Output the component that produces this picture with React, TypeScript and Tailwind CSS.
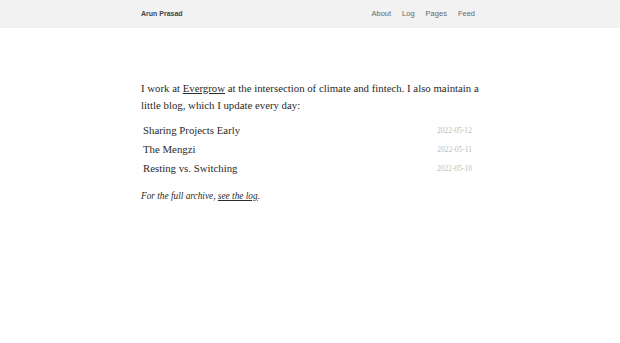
export default function App() {
  const posts = [
    ["Sharing Projects Early", "2022-05-12"],
    ["The Mengzi", "2022-05-11"],
    ["Resting vs. Switching", "2022-05-10"],
  ];
  return (
    <div className="min-h-[343px] bg-white">
      <header className="bg-[#f2f2f2] h-[28px]">
        <div className="w-[338px] mx-auto h-full flex items-center justify-between font-['Liberation_Sans',sans-serif] text-[7.5px]">
          <span className="font-bold text-[#444] text-[7px]">Arun Prasad</span>
          <nav className="flex gap-[11px] text-[#666] pr-[4px]">
            <span>About</span>
            <span>Log</span>
            <span>Pages</span>
            <span>Feed</span>
          </nav>
        </div>
      </header>
      <main className="w-[340px] mx-auto pl-[1px] pt-[52px] font-['Liberation_Serif',serif] text-[#2a2a2a]">
        <p className="text-[10.8px] leading-[17px]">
          I work at <span className="underline">Evergrow</span> at the intersection of climate and fintech. I also maintain a little blog, which I update every day:
        </p>
        <ul className="mt-[7px] pl-[2px] pr-[8px]">
          {posts.map(([t, d]) => (
            <li key={t} className="flex justify-between items-center h-[19px]">
              <span className="text-[10.8px]">{t}</span>
              <span className="text-[7.5px] text-[#bbb]">{d}</span>
            </li>
          ))}
        </ul>
        <p className="mt-[12px] italic text-[9.3px]">
          For the full archive, <span className="underline">see the log</span>.
        </p>
      </main>
    </div>
  );
}
